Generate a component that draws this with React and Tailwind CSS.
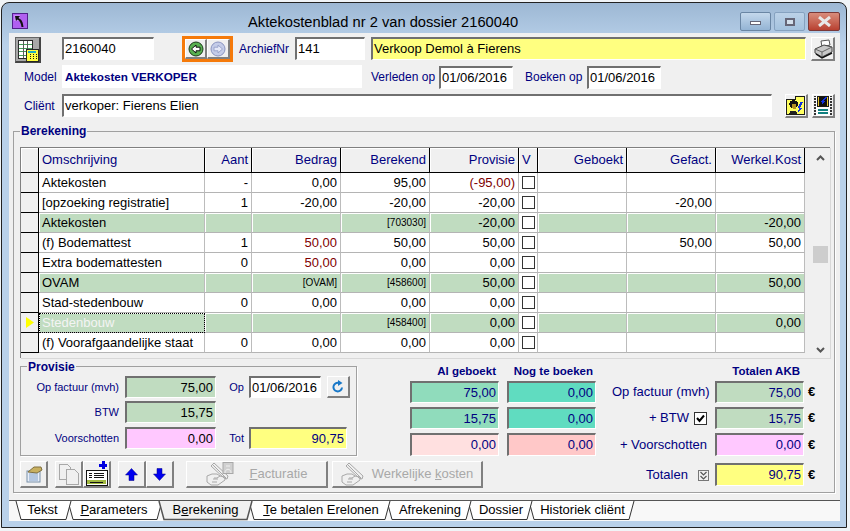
// App.jsx - Aktekostenblad venster
import React from 'react';

const font = { fontFamily: '"Liberation Sans", Arial, sans-serif' };

const rows = [
  { name: 'Aktekosten', aant: '-', bedrag: '0,00', berekend: '95,00', provisie: '(-95,00)', provRed: true },
  { name: '[opzoeking registratie]', aant: '1', bedrag: '-20,00', berekend: '-20,00', provisie: '-20,00', gefact: '-20,00' },
  { name: 'Aktekosten', green: true, berekend: '[703030]', provisie: '-20,00', werkel: '-20,00' },
  { name: '(f) Bodemattest', aant: '1', bedrag: '50,00', bedragRed: true, berekend: '50,00', provisie: '50,00', gefact: '50,00', werkel: '50,00' },
  { name: 'Extra bodemattesten', aant: '0', bedrag: '50,00', bedragRed: true, berekend: '0,00', provisie: '0,00' },
  { name: 'OVAM', green: true, bedrag: '[OVAM]', berekend: '[458600]', provisie: '50,00', werkel: '50,00' },
  { name: 'Stad-stedenbouw', aant: '0', bedrag: '0,00', berekend: '0,00', provisie: '0,00' },
  { name: 'Stedenbouw', green: true, selected: true, berekend: '[458400]', provisie: '0,00', werkel: '0,00' },
  { name: '(f) Voorafgaandelijke staat', aant: '0', bedrag: '0,00', berekend: '0,00', provisie: '0,00' },
];

const tabs = [
  { pre: '', u: '', post: 'Tekst', w: 57, z: 'z-[7]', nudge: 'pr-[2px]' },
  { pre: '', u: 'P', post: 'arameters', w: 96, z: 'z-[6]', nudge: 'pr-[2px]' },
  { pre: 'B', u: 'e', post: 'rekening', w: 95, z: 'z-[9]', active: true, nudge: '' },
  { pre: '', u: 'T', post: 'e betalen Erelonen', w: 143, z: 'z-[5]', nudge: 'pl-[3px]' },
  { pre: '', u: '', post: 'Afrekening', w: 86, z: 'z-[4]', nudge: 'pl-[2px]' },
  { pre: '', u: '', post: 'Dossier', w: 66, z: 'z-[3]', nudge: 'pl-[2px]' },
  { pre: '', u: '', post: 'Historiek cliënt', w: 107, z: 'z-[2]', nudge: 'pl-[2px]' },
];

// Veld met verzonken rand
const Field = ({ w, h = 'h-[23px]', bg = 'bg-white', text = 'text-black', right, children, className = '' }) => (
  <div
    className={`${w} ${h} ${bg} ${text} ${className} shrink-0 flex items-center border-t-2 border-l-2 border-r border-b border-t-[#707070] border-l-[#707070] border-r-white border-b-white text-[13px] ${right ? 'justify-end pr-[2px]' : 'pl-[1px]'}`}
  >
    {children}
  </div>
);

// Knop met verhoogde rand
const Btn = ({ w, h = 'h-[27px]', className = '', children }) => (
  <div
    className={`${w} ${h} ${className} shrink-0 flex items-center justify-center bg-[#f0f0f0] border-t border-l border-r-2 border-b-2 border-t-white border-l-white border-r-[#808080] border-b-[#808080]`}
  >
    {children}
  </div>
);

const Label = ({ w, className = '', children }) => (
  <div className={`${w} ${className} shrink-0 text-[#000080] text-[12px] leading-none whitespace-nowrap`}>{children}</div>
);

const Check = ({ checked }) => (
  <div className="w-[13px] h-[13px] border border-[#333] bg-white flex items-center justify-center shrink-0">
    {checked && (
      <svg width="9" height="9" viewBox="0 0 9 9">
        <path d="M1 4 L3.5 7 L8 1.5" fill="none" stroke="#000" strokeWidth="2" />
      </svg>
    )}
  </div>
);

const AppIcon = () => (
  <svg width="16" height="16" viewBox="0 0 16 16" className="shrink-0">
    <rect x="0.5" y="0.5" width="15" height="15" fill="#b060f0" stroke="#50208a" />
    <rect x="2" y="2" width="6" height="6" fill="#c888f8" />
    <path d="M3 3 L8 3 L6.5 5 C10 6.5 11 9.5 11.5 14 L9.5 14 C9 10.5 8 8 5.5 6.5 L4 8 Z" fill="#111" />
  </svg>
);

const SheetIcon = () => (
  <div className="w-[26px] h-[26px] bg-[#a8a8a8] border border-[#666] border-r-2 border-b-2 border-r-[#444] border-b-[#444] flex items-center justify-center shrink-0">
    <svg width="24" height="24" viewBox="0 0 24 24" shapeRendering="crispEdges">
      <rect x="2.5" y="2.5" width="15" height="18" fill="#fff" stroke="#222" />
      <path d="M3 6h14M3 10h14M3 14h14M3 18h14" stroke="#3c9a50" />
      <path d="M7.5 3v17M12.5 3v17" stroke="#555" />
      <rect x="10.5" y="11.5" width="13" height="12" fill="#ffff40" stroke="#222" />
      <rect x="12" y="13" width="9" height="2" fill="#20b0c0" />
      <path d="M12 17h1M15 17h1M18 17h1M21 17h1M12 19h1M15 19h1M18 19h1M21 19h1M12 21h1M15 21h1M18 21h1M21 21h1" stroke="#111" />
    </svg>
  </div>
);

const RoundArrow = ({ dir, disabled }) => (
  <svg width="16" height="16" viewBox="0 0 16 16">
    <circle cx="8" cy="8" r="7" fill={disabled ? '#c4cce8' : '#58b050'} stroke={disabled ? '#8a94c0' : '#1a3a1a'} />
    <path
      d={dir === 'left' ? 'M3.5 8 L8 4 V6.2 H12 V9.8 H8 V12 Z' : 'M12.5 8 L8 4 V6.2 H4 V9.8 H8 V12 Z'}
      fill={disabled ? '#e4e8f8' : '#fff'}
      stroke={disabled ? '#9aa4cc' : '#111'}
    />
  </svg>
);

const PrinterIcon = () => (
  <svg width="20" height="20" viewBox="0 0 20 20">
    <path d="M8 2 L16 1 L17 6 L9 8 Z" fill="#fff" stroke="#555" />
    <path d="M2 10 L11 6 L19 8 L19 13 L9 18 L2 14 Z" fill="#c8c8c8" stroke="#444" />
    <path d="M2 10 L9 13 L19 8 M9 13 V18" fill="none" stroke="#666" />
    <path d="M3 15 L9 19 L19 14" fill="none" stroke="#111" strokeWidth="1.5" />
  </svg>
);

const PersonIcon = () => (
  <svg width="21" height="21" viewBox="0 0 21 21" shapeRendering="crispEdges">
    <path d="M1 4 H10 V1 H19 V20 H1 Z" fill="#ffff60" stroke="#111" />
    <ellipse cx="8" cy="9" rx="4.5" ry="4" fill="#111" />
    <path d="M6 9 H11 V14 H7 Z" fill="#b09020" />
    <path d="M3 19 C4 15 11 15 12 19 Z" fill="#222" />
    <path d="M18 7 L15 13 L17 13 L12 19 L14 13 L12 13 L15 7 Z" fill="#1030e0" />
  </svg>
);

const FilmIcon = () => (
  <svg width="21" height="21" viewBox="0 0 21 21" shapeRendering="crispEdges">
    <rect x="3" y="0" width="15" height="21" fill="#fff" />
    <path d="M2 0v21M19 0v21" stroke="#333" strokeDasharray="2 1" strokeWidth="2" />
    <rect x="5" y="1" width="11" height="11" fill="#e8c830" stroke="#111" />
    <path d="M6 2h9v9H6z" fill="#111" />
    <path d="M13 2 L8 7 L10 7 L7 11 L13 6 L11 6 L15 2 Z" fill="#1030e0" />
    <path d="M5 15h11M5 18h11" stroke="#108080" strokeWidth="2" />
  </svg>
);

const RefreshIcon = () => (
  <svg width="14" height="14" viewBox="0 0 14 14">
    <path d="M11 7.5 A4.3 4.3 0 1 1 8 3" fill="none" stroke="#1878c8" strokeWidth="2" />
    <path d="M7 0 L11.5 3 L7 6 Z" fill="#1878c8" />
  </svg>
);

const ToolIcon = () => (
  <svg width="18" height="18" viewBox="0 0 18 18">
    <rect x="2" y="6" width="13" height="11" fill="#e8eef8" stroke="#7890a8" />
    <path d="M4 9h9M4 11h9M4 13h9M4 15h9" stroke="#80a0c8" />
    <path d="M3 7 L9 2 H16 L17 5 L12 8 Z" fill="#c8b060" stroke="#807040" />
  </svg>
);

const CopyIcon = () => (
  <svg width="22" height="22" viewBox="0 0 22 22" fill="#f0f0f0" stroke="#a8a8a8" shapeRendering="crispEdges">
    <path d="M1 1 H9 L12 4 V16 H1 Z" />
    <path d="M8 6 H16 L20 10 V21 H8 Z" />
  </svg>
);

const AddIcon = () => (
  <svg width="24" height="26" viewBox="0 0 24 26" shapeRendering="crispEdges">
    <rect x="1" y="9" width="21" height="15" fill="#fff" stroke="#111" />
    <rect x="2" y="19" width="19" height="4" fill="#a0b840" />
    <path d="M4 12h3M9 12h10M4 14h3M9 14h10M4 16h3M9 16h10M5 21h13" stroke="#111" />
    <path d="M14 4h8M18 0v8" stroke="#0000e0" strokeWidth="3" />
  </svg>
);

const BlueArrow = ({ up }) => (
  <svg width="13" height="13" viewBox="0 0 13 13">
    <path d={up ? 'M6.5 0.5 L12.5 7 H9 V12.5 H4 V7 H0.5 Z' : 'M6.5 12.5 L12.5 6 H9 V0.5 H4 V6 H0.5 Z'} fill="#0000f0" stroke="#000080" strokeWidth="0.5" />
  </svg>
);

// Uitgegrijsde hand met pen
const HandIcon = ({ person }) => (
  <svg width="28" height="24" viewBox="0 0 28 24" fill="none" stroke="#a8a8a8">
    <path d="M1 14 L6 12 H11 L14 14 L11 16 H8 M1 14 V20 L5 23 H12 L19 18 V15 L14 14" />
    <path d="M7 17 h5 M6 20 h5" />
    <path d="M6 2 L20 16 M8 1 L22 14 L21 17 L18 16 L5 4 Z" />
    {person && <rect x="17" y="0.5" width="10" height="11" fill="#d0d0d0" stroke="#a8a8a8" />}
    {person && <path d="M19 11 C19 6 25 6 25 11 M20 4 h4" stroke="#f0f0f0" />}
  </svg>
);

const Chevron = ({ up }) => (
  <svg width="9" height="6" viewBox="0 0 9 6">
    <path d={up ? 'M1 5 L4.5 1.5 L8 5' : 'M1 1 L4.5 4.5 L8 1'} fill="none" stroke="#555" strokeWidth="2" />
  </svg>
);

const Head = ({ w, right = true, children }) => (
  <div className={`${w} h-full flex items-center bg-[#f0f0f0] border-r border-b border-r-black border-b-black text-[#000080] text-[13px] shadow-[inset_1px_1px_0_#fff] ${right ? 'justify-end pr-[3px]' : 'pl-[3px]'}`}>
    {children}
  </div>
);

const Cell = ({ w, green, red, children }) => {
  const small = typeof children === 'string' && children.startsWith('[') && !children.startsWith('[opz');
  return (
    <div
      className={`${w} h-full flex items-center justify-end pr-[3px] border-r border-b border-r-[#bcbcbc] border-b-[#b4b4b4] ${green ? 'bg-[#c0dcc0] shadow-[inset_1px_1px_0_#fff]' : 'bg-white'} ${red ? 'text-[#800000]' : 'text-black'} ${small ? 'text-[10px]' : 'text-[13px]'}`}
    >
      {children}
    </div>
  );
};

const GridRow = ({ r }) => (
  <div className="flex h-[20px]">
    <div className="w-[18px] h-full bg-[#f0f0f0] border-r border-b border-r-black border-b-black flex items-center justify-center">
      {r.selected && (
        <svg width="8" height="11" viewBox="0 0 8 11">
          <path d="M0 0 L8 5.5 L0 11 Z" fill="#ffff00" />
        </svg>
      )}
    </div>
    <div
      className={`w-[166px] h-full flex items-center pl-[3px] text-[13px] border-r border-b border-r-[#bcbcbc] border-b-[#b4b4b4] ${r.green ? 'bg-[#c0dcc0] shadow-[inset_1px_1px_0_#fff]' : 'bg-white'} ${r.selected ? 'text-[#f4f4f4] outline-1 outline-dotted outline-black -outline-offset-1' : 'text-black'}`}
    >
      {r.name}
    </div>
    <Cell w="w-[47px]" green={r.green}>{r.aant}</Cell>
    <Cell w="w-[89px]" green={r.green} red={r.bedragRed}>{r.bedrag}</Cell>
    <Cell w="w-[89px]" green={r.green}>{r.berekend}</Cell>
    <Cell w="w-[89px]" green={r.green} red={r.provRed}>{r.provisie}</Cell>
    <div className="w-[19px] h-full bg-white border-r border-b border-r-[#bcbcbc] border-b-[#b4b4b4] flex items-center justify-center">
      <Check />
    </div>
    <Cell w="w-[89px]" green={r.green} />
    <Cell w="w-[89px]" green={r.green}>{r.gefact}</Cell>
    <Cell w="w-[89px]" green={r.green}>{r.werkel}</Cell>
  </div>
);

const Tab = ({ t }) => (
  <div className={`relative ${t.z} ${t.nudge} h-[20px] shrink-0 -ml-[5px] first:ml-0 flex items-center justify-center text-[13px] text-black pb-[2px]`} style={{ width: t.w }}>
    <svg className="absolute inset-0" width={t.w} height="20" viewBox={`0 0 ${t.w} 20`}>
      <path
        d={`M1 0 L6 18.5 L${t.w - 6} 18.5 L${t.w - 1} 0`}
        fill={t.active ? '#f0f0f0' : '#fff'}
        stroke={t.active ? 'none' : '#333'}
      />
      {t.active && <path d={`M1 0 L6 18.5 L${t.w - 6} 18.5 L${t.w - 1} 0`} fill="none" stroke="#555" strokeWidth="1.5" />}
    </svg>
    <span className="relative">
      {t.pre}
      {t.u && <u>{t.u}</u>}
      {t.post}
    </span>
  </div>
);

export default function App() {
  return (
    <div className="w-[850px] h-[531px] bg-[#f0f4f7] pl-[1px] pt-[2px] overflow-hidden" style={font}>
      <div className="w-[846px] h-[526px] rounded-t-[8px] border border-[#222] bg-gradient-to-b from-[#9db8d4] to-[#b9d1ea] to-[8%] flex flex-col pl-[7px] pr-[5px]">
        {/* Titelbalk */}
        <div className="h-[30px] shrink-0 flex items-start">
          <div className="ml-[3px] mt-[10px]">
            <AppIcon />
          </div>
          <div className="ml-[220px] mt-[10px] text-[14.7px] leading-[18px] text-black whitespace-nowrap">
            Aktekostenblad nr 2 van dossier 2160040
          </div>
          <div className="ml-auto mr-[1px] mt-[9px] flex gap-[3px] h-[19px]">
            <div className="w-[31px] rounded-[2px] border border-[#6a86a4] bg-gradient-to-b from-[#c4d8ec] to-[#94b4d4] flex items-center justify-center">
              <div className="w-[11px] h-[4px] mt-[3px] bg-white border border-[#667]" />
            </div>
            <div className="w-[31px] rounded-[2px] border border-[#86a2c0] bg-gradient-to-b from-[#bcd2e8] to-[#a4c2de] flex items-center justify-center">
              <div className="w-[10px] h-[8px] bg-[#d4e0ec] border-2 border-[#667]" />
            </div>
            <div className="w-[32px] rounded-[2px] border border-[#7a3838] bg-gradient-to-b from-[#d88c7c] to-[#b84030] flex items-center justify-center">
              <svg width="15" height="11" viewBox="0 0 15 11">
                <path d="M2 1 L13 10 M13 1 L2 10" stroke="#e8e8e8" strokeWidth="3" />
              </svg>
            </div>
          </div>
        </div>

        {/* Werkgebied */}
        <div className="w-[831px] h-[487px] shrink-0 bg-[#f0f0f0] flex flex-col pt-[3px]">
          <div className="flex items-start h-[27px] shrink-0 pl-[6px]">
            <div className="mt-[1px]"><SheetIcon /></div>
            <Field w="w-[92px] ml-[21px] mt-[1px]">2160040</Field>
            <div className="ml-[28px] w-[51px] h-[26px] border-[3px] border-[#f57a0a] flex">
              <Btn w="w-[22px]" h="h-[20px]"><RoundArrow dir="left" /></Btn>
              <Btn w="w-[23px]" h="h-[20px]"><RoundArrow dir="right" disabled /></Btn>
            </div>
            <Label w="w-[56px] ml-[6px] mt-[7px]">ArchiefNr</Label>
            <Field w="w-[70px] mt-[1px]">141</Field>
            <Field w="w-[435px] ml-[6px] mt-[1px]" bg="bg-[#ffff80]">Verkoop Demol à Fierens</Field>
            <Btn w="w-[24px] ml-[5px] mt-[1px]" h="h-[24px]"><PrinterIcon /></Btn>
          </div>

          <div className="flex items-start h-[24px] shrink-0 mt-[2px] pl-[15px]">
            <Label w="w-[38px] mt-[6px]">Model</Label>
            <div className="w-[300px] h-[23px] bg-white flex items-center pl-[3px] text-[11.7px] font-bold text-[#000080]">Aktekosten VERKOPER</div>
            <Label w="w-[68px] ml-[9px] mt-[6px]">Verleden op</Label>
            <Field w="w-[74px] mt-[1px]">01/06/2016</Field>
            <Label w="w-[62px] ml-[12px] mt-[6px]">Boeken op</Label>
            <Field w="w-[74px] mt-[1px]">01/06/2016</Field>
          </div>

          <div className="flex items-start h-[24px] shrink-0 mt-[5px] pl-[15px]">
            <Label w="w-[38px] mt-[6px]">Cliënt</Label>
            <Field w="w-[710px]">verkoper: Fierens Elien</Field>
            <Btn w="w-[23px] ml-[13px]" h="h-[24px]"><PersonIcon /></Btn>
            <Btn w="w-[23px] ml-[4px]" h="h-[24px]"><FilmIcon /></Btn>
          </div>

          {/* Groep Berekening */}
          <div className="relative w-[822px] h-[362px] shrink-0 mt-[13px] ml-[4px] border border-[#a0a0a0] pt-[15px] pl-[6px] shadow-[1px_1px_0_#fff]">
            <div className="absolute left-[6px] -top-[7px] bg-[#f0f0f0] px-[1px] text-[12px] leading-[13px] font-bold text-[#000080]">Berekening</div>

            <div className="w-[810px] h-[211px] border-t border-l border-[#808080] flex bg-[#f0f0f0] shadow-[1px_1px_0_#d8d8d8]">
              <div className="w-[785px] shrink-0 flex flex-col">
                <div className="flex h-[25px]">
                  <Head w="w-[18px]" />
                  <Head w="w-[166px]" right={false}>Omschrijving</Head>
                  <Head w="w-[47px]">Aant</Head>
                  <Head w="w-[89px]">Bedrag</Head>
                  <Head w="w-[89px]">Berekend</Head>
                  <Head w="w-[89px]">Provisie</Head>
                  <div className="w-[19px]"><Head w="w-full" right={false}>V</Head></div>
                  <Head w="w-[89px]">Geboekt</Head>
                  <Head w="w-[89px]">Gefact.</Head>
                  <Head w="w-[89px]">Werkel.Kost</Head>
                </div>
                {rows.map((r, i) => <GridRow key={i} r={r} />)}
              </div>
              {/* Schuifbalk */}
              <div className="w-[23px] h-[206px] flex flex-col items-center pt-[7px] pl-[6px]">
                <Chevron up />
                <div className="w-[15px] h-[17px] bg-[#cdcdcd] mt-[85px]" />
                <div className="mt-auto mb-[1px]"><Chevron /></div>
              </div>
            </div>

            {/* Onderste velden */}
            <div className="flex items-start mt-[8px]">
              <div className="relative w-[337px] h-[90px] shrink-0 border border-[#a0a0a0] pt-[9px] shadow-[1px_1px_0_#fff]">
                <div className="absolute left-[6px] -top-[6px] bg-[#f0f0f0] px-[1px] text-[12px] leading-[13px] font-bold text-[#000080]">Provisie</div>
                <div className="flex items-center">
                  <div className="w-[98px] text-right text-[11px] text-[#000080] whitespace-nowrap">Op factuur (mvh)</div>
                  <Field w="w-[91px] ml-[6px]" bg="bg-[#c0dcc0]" h="h-[22px]" right>75,00</Field>
                  <div className="w-[28px] text-right text-[11px] text-[#000080]">Op</div>
                  <Field w="w-[72px] ml-[5px]" h="h-[22px]">01/06/2016</Field>
                  <Btn w="w-[23px] ml-[6px]" h="h-[22px]"><RefreshIcon /></Btn>
                </div>
                <div className="flex items-center mt-[3px]">
                  <div className="w-[98px] text-right text-[11px] text-[#000080]">BTW</div>
                  <Field w="w-[91px] ml-[6px]" bg="bg-[#c0dcc0]" h="h-[22px]" right>15,75</Field>
                </div>
                <div className="flex items-center mt-[4px]">
                  <div className="w-[98px] text-right text-[11px] text-[#000080]">Voorschotten</div>
                  <Field w="w-[91px] ml-[6px]" bg="bg-[#ffc8ff]" h="h-[22px]" right>0,00</Field>
                  <div className="w-[28px] text-right text-[11px] text-[#000080]">Tot</div>
                  <Field w="w-[98px] ml-[5px]" bg="bg-[#ffff80]" text="text-[#000080]" h="h-[22px]" right>90,75</Field>
                </div>
              </div>

              <div className="w-[89px] ml-[53px] shrink-0 flex flex-col gap-[4px]">
                <div className="h-[11px] text-right pr-[3px] text-[11.5px] leading-[11px] font-bold text-[#000080]">Al geboekt</div>
                <Field w="w-[89px]" h="h-[22px]" bg="bg-[#90dcbc]" text="text-[#000080]" right>75,00</Field>
                <Field w="w-[89px]" h="h-[22px]" bg="bg-[#90dcbc]" text="text-[#000080]" right>15,75</Field>
                <Field w="w-[89px]" h="h-[23px]" bg="bg-[#ffe0e0]" text="text-[#000080]" right>0,00</Field>
              </div>
              <div className="w-[89px] ml-[8px] shrink-0 flex flex-col gap-[4px]">
                <div className="h-[11px] text-right pr-[3px] text-[11.5px] leading-[11px] font-bold text-[#000080] whitespace-nowrap">Nog te boeken</div>
                <Field w="w-[89px]" h="h-[22px]" bg="bg-[#60dcc0]" text="text-[#000080]" right>0,00</Field>
                <Field w="w-[89px]" h="h-[22px]" bg="bg-[#60dcc0]" text="text-[#000080]" right>0,00</Field>
                <Field w="w-[89px]" h="h-[23px]" bg="bg-[#ffc8c8]" text="text-[#000080]" right>0,00</Field>
              </div>

              <div className="w-[205px] ml-[16px] shrink-0 flex flex-col gap-[4px]">
                <div className="h-[11px] w-[188px] text-right text-[11.5px] leading-[11px] font-bold text-[#000080] whitespace-nowrap">Totalen AKB</div>
                <div className="flex items-center">
                  <div className="w-[95px] text-right text-[13px] text-[#000080] whitespace-nowrap">Op factuur (mvh)</div>
                  <Field w="w-[89px] ml-[8px]" h="h-[22px]" bg="bg-[#c0dcc0]" text="text-[#000080]" right>75,00</Field>
                  <span className="ml-[4px] text-[13px] font-bold text-black">€</span>
                </div>
                <div className="flex items-center">
                  <div className="w-[95px] flex justify-end items-center gap-[5px] text-[13px] text-[#000080] whitespace-nowrap">+ BTW <Check checked /></div>
                  <Field w="w-[89px] ml-[8px]" h="h-[22px]" bg="bg-[#c0dcc0]" text="text-[#000080]" right>15,75</Field>
                  <span className="ml-[4px] text-[13px] font-bold text-black">€</span>
                </div>
                <div className="flex items-center">
                  <div className="w-[95px] text-right text-[13px] text-[#000080] whitespace-nowrap">+ Voorschotten</div>
                  <Field w="w-[89px] ml-[8px]" h="h-[23px]" bg="bg-[#ffc8ff]" text="text-[#000080]" right>0,00</Field>
                  <span className="ml-[4px] text-[13px] font-bold text-black">€</span>
                </div>
              </div>
            </div>

            {/* Knoppenbalk */}
            <div className="flex items-start mt-[5px]">
              <Btn w="w-[28px]"><ToolIcon /></Btn>
              <Btn w="w-[28px] ml-[7px]"><CopyIcon /></Btn>
              <Btn w="w-[28px]"><AddIcon /></Btn>
              <Btn w="w-[28px] ml-[7px]"><BlueArrow up /></Btn>
              <Btn w="w-[28px]"><BlueArrow /></Btn>
              <Btn w="w-[142px] ml-[12px]" className="gap-[16px] text-[13px] text-[#a8a8a8]">
                <HandIcon person />
                <span><u>F</u>acturatie</span>
              </Btn>
              <Btn w="w-[151px] ml-[4px]" className="gap-[3px] text-[13px] text-[#a8a8a8]">
                <HandIcon />
                <span>Werkelijke <u>k</u>osten</span>
              </Btn>
              <div className="ml-[163px] mt-[6px] w-[40px] text-[13px] leading-[16px] text-[#000080]">Totalen</div>
              <div className="ml-[12px] mt-[9px] w-[11px] h-[11px] border border-[#777] flex flex-col items-center justify-center">
                <svg width="9" height="9" viewBox="0 0 9 9">
                  <path d="M1.5 1 L4.5 4 L7.5 1 M1.5 5 L4.5 8 L7.5 5" fill="none" stroke="#555" strokeWidth="1.2" />
                </svg>
              </div>
              <Field w="w-[89px] ml-[6px] mt-[2px]" h="h-[23px]" bg="bg-[#ffff80]" text="text-[#000080]" right>90,75</Field>
              <span className="ml-[4px] mt-[6px] text-[13px] font-bold leading-[16px] text-black">€</span>
            </div>
          </div>

          {/* Tabbladen */}
          <div className="flex-1 mt-[7px] pl-[6px] flex bg-[#f8f8f8] border-t border-t-[#555]">
            {tabs.map((t, i) => <Tab key={i} t={t} />)}
          </div>
        </div>
      </div>
    </div>
  );
}
